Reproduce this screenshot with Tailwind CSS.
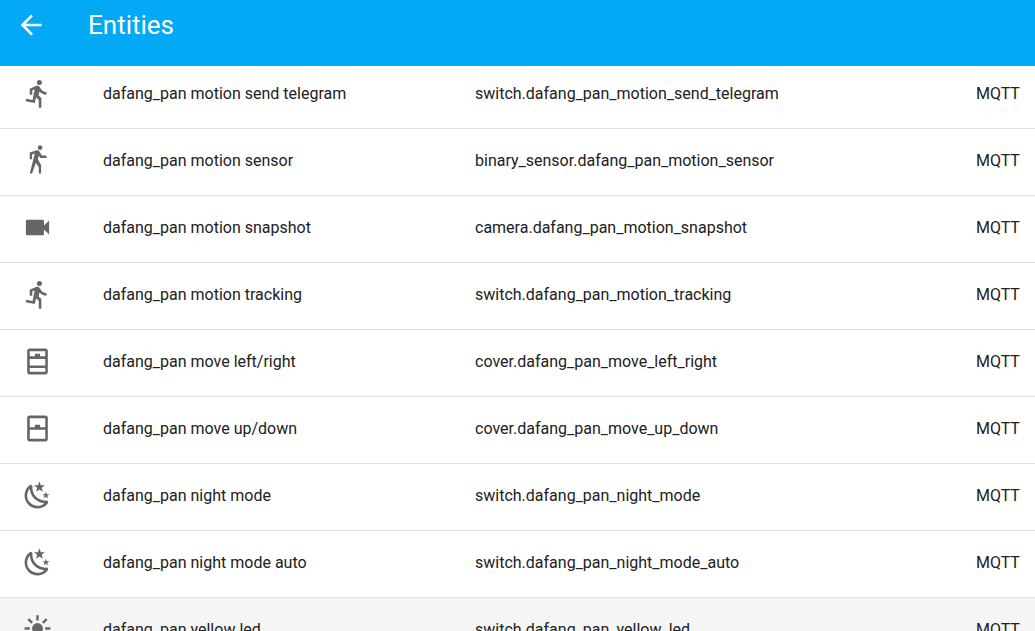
<!DOCTYPE html>
<html lang="en">
<head>
<meta charset="utf-8">
<meta name="viewport" content="width=device-width, initial-scale=1">
<title>Entities</title>
<script src="https://cdn.jsdelivr.net/npm/@tailwindcss/browser@4"></script>
</head>
<body class="flex h-screen flex-col overflow-hidden bg-white font-['Roboto',sans-serif] text-[#212121]">
<svg class="hidden" aria-hidden="true">
  <symbol id="run" viewBox="0 0 24 24"><path d="M13.49,5.48C14.59,5.48 15.49,4.58 15.49,3.48C15.49,2.38 14.59,1.48 13.49,1.48C12.39,1.48 11.49,2.38 11.49,3.48C11.49,4.58 12.39,5.48 13.49,5.48M9.89,19.38L10.89,14.98L12.99,16.98V22.98H14.99V15.48L12.89,13.48L13.49,10.48C14.79,11.98 16.79,12.98 18.99,12.98V10.98C17.09,10.98 15.49,9.98 14.69,8.58L13.69,6.98C13.29,6.38 12.69,5.98 11.99,5.98C11.69,5.98 11.49,6.08 11.19,6.08L5.99,8.28V12.98H7.99V9.58L9.79,8.88L8.19,16.98L3.29,15.98L2.89,17.98L9.89,19.38Z"/></symbol>
  <symbol id="walk" viewBox="0 0 24 24"><path d="M14.12,10H19V8.2H15.38L13.38,4.87C13.08,4.37 12.54,4.03 11.92,4.03C11.74,4.03 11.58,4.06 11.42,4.11L6,5.8V11H7.8V7.33L9.91,6.67L6,22H7.8L10.67,13.89L13,17V22H14.8V15.59L12.31,11.05L13.04,8.18M14,3.8C15,3.8 15.8,3 15.8,2C15.8,1 15,0.2 14,0.2C13,0.2 12.2,1 12.2,2C12.2,3 13,3.8 14,3.8Z"/></symbol>
  <symbol id="video" viewBox="0 0 24 24"><path d="M17,10.5V7A1,1 0 0,0 16,6H4A1,1 0 0,0 3,7V17A1,1 0 0,0 4,18H16A1,1 0 0,0 17,17V13.5L21,17.5V6.5L17,10.5Z"/></symbol>
  <symbol id="window-open" viewBox="0 0 24 24"><path d="M6,8H10V6H14V8H18V4H6V8M18,10H6V15H18V10M6,20H18V17H6V20M6,2H18A2,2 0 0,1 20,4V20A2,2 0 0,1 18,22H6A2,2 0 0,1 4,20V4A2,2 0 0,1 6,2Z"/></symbol>
  <symbol id="window-closed" viewBox="0 0 24 24"><path d="M6,11H10V9H14V11H18V4H6V11M18,13H6V20H18V13M6,2H18A2,2 0 0,1 20,4V20A2,2 0 0,1 18,22H6A2,2 0 0,1 4,20V4A2,2 0 0,1 6,2Z"/></symbol>
  <symbol id="night" viewBox="0 0 24 24"><path d="M17.75,4.09L15.22,6.03L16.13,9.09L13.5,7.28L10.87,9.09L11.78,6.03L9.25,4.09L12.44,4L13.5,1L14.56,4L17.75,4.09M21.25,11L19.61,12.25L20.2,14.23L18.5,13.06L16.8,14.23L17.39,12.25L15.75,11L17.81,10.95L18.5,9L19.19,10.95L21.25,11M18.97,15.95C19.8,15.87 20.69,17.05 20.16,17.8C19.84,18.25 19.5,18.67 19.08,19.07C15.17,23 8.84,23 4.94,19.07C1.03,15.17 1.03,8.83 4.94,4.93C5.34,4.53 5.76,4.17 6.21,3.85C6.96,3.32 8.14,4.21 8.06,5.04C7.79,7.9 8.75,10.87 10.95,13.06C13.14,15.26 16.1,16.22 18.97,15.95M17.33,17.97C14.5,17.81 11.7,16.64 9.53,14.5C7.36,12.31 6.2,9.5 6.04,6.68C3.23,9.82 3.34,14.64 6.35,17.66C9.37,20.67 14.19,20.78 17.33,17.97Z"/></symbol>
  <symbol id="sun" viewBox="0 0 24 24"><circle cx="12" cy="11.2" r="4.2"/><path d="M12,1V5M12,17.4V21.4M2,11.2H6M18,11.2H22M4.9,3.9L7.8,6.8M19.1,3.9L16.2,6.8M4.9,18.5L7.8,15.6M19.1,18.5L16.2,15.6" stroke="currentColor" stroke-width="1.9"/></symbol>
</svg>

<header class="z-10 flex h-[66px] shrink-0 items-start bg-[#03a9f4] pt-[9px] pl-[15px] text-white">
  <button type="button" aria-label="Back" class="size-8">
    <svg class="size-8 fill-current" viewBox="0 0 24 24"><path d="M20,11V13H8L13.5,18.5L12.08,19.92L4.16,12L12.08,4.08L13.5,5.5L8,11H20Z"/></svg>
  </button>
  <h1 class="ml-[41px] text-[26px] leading-8">Entities</h1>
</header>

<main class="-mt-1 min-h-0 flex-1 overflow-hidden">
<table class="w-full table-fixed border-separate border-spacing-0 text-left text-base leading-5 whitespace-nowrap [&_td]:h-[67px] [&_td]:border-b [&_td]:border-[#e0e0e0] [&_td]:p-0 [&_td]:pb-[3px] [&_th]:border-b [&_th]:border-[#e0e0e0] [&_th]:p-0 [&_th]:pb-[3px] [&_th]:font-normal [&_svg]:ml-[22px] [&_svg]:size-[31px] [&_svg]:fill-current [&_svg]:text-[#666666]">
  <colgroup><col class="w-[103px]"><col class="w-[372px]"><col><col class="w-[59px]"></colgroup>
  <tbody>
    <tr><td><svg><use href="#run"/></svg></td><th scope="row">dafang_pan motion send telegram</th><td>switch.dafang_pan_motion_send_telegram</td><td>MQTT</td></tr>
    <tr><td><svg><use href="#walk"/></svg></td><th scope="row">dafang_pan motion sensor</th><td>binary_sensor.dafang_pan_motion_sensor</td><td>MQTT</td></tr>
    <tr><td><svg><use href="#video"/></svg></td><th scope="row">dafang_pan motion snapshot</th><td>camera.dafang_pan_motion_snapshot</td><td>MQTT</td></tr>
    <tr><td><svg><use href="#run"/></svg></td><th scope="row">dafang_pan motion tracking</th><td>switch.dafang_pan_motion_tracking</td><td>MQTT</td></tr>
    <tr><td><svg><use href="#window-open"/></svg></td><th scope="row">dafang_pan move left/right</th><td>cover.dafang_pan_move_left_right</td><td>MQTT</td></tr>
    <tr><td><svg><use href="#window-closed"/></svg></td><th scope="row">dafang_pan move up/down</th><td>cover.dafang_pan_move_up_down</td><td>MQTT</td></tr>
    <tr><td><svg><use href="#night"/></svg></td><th scope="row">dafang_pan night mode</th><td>switch.dafang_pan_night_mode</td><td>MQTT</td></tr>
    <tr><td><svg><use href="#night"/></svg></td><th scope="row">dafang_pan night mode auto</th><td>switch.dafang_pan_night_mode_auto</td><td>MQTT</td></tr>
    <tr class="bg-[#f5f5f5]"><td><svg><use href="#sun"/></svg></td><th scope="row">dafang_pan yellow led</th><td>switch.dafang_pan_yellow_led</td><td>MQTT</td></tr>
  </tbody>
</table>
</main>
</body>
</html>
